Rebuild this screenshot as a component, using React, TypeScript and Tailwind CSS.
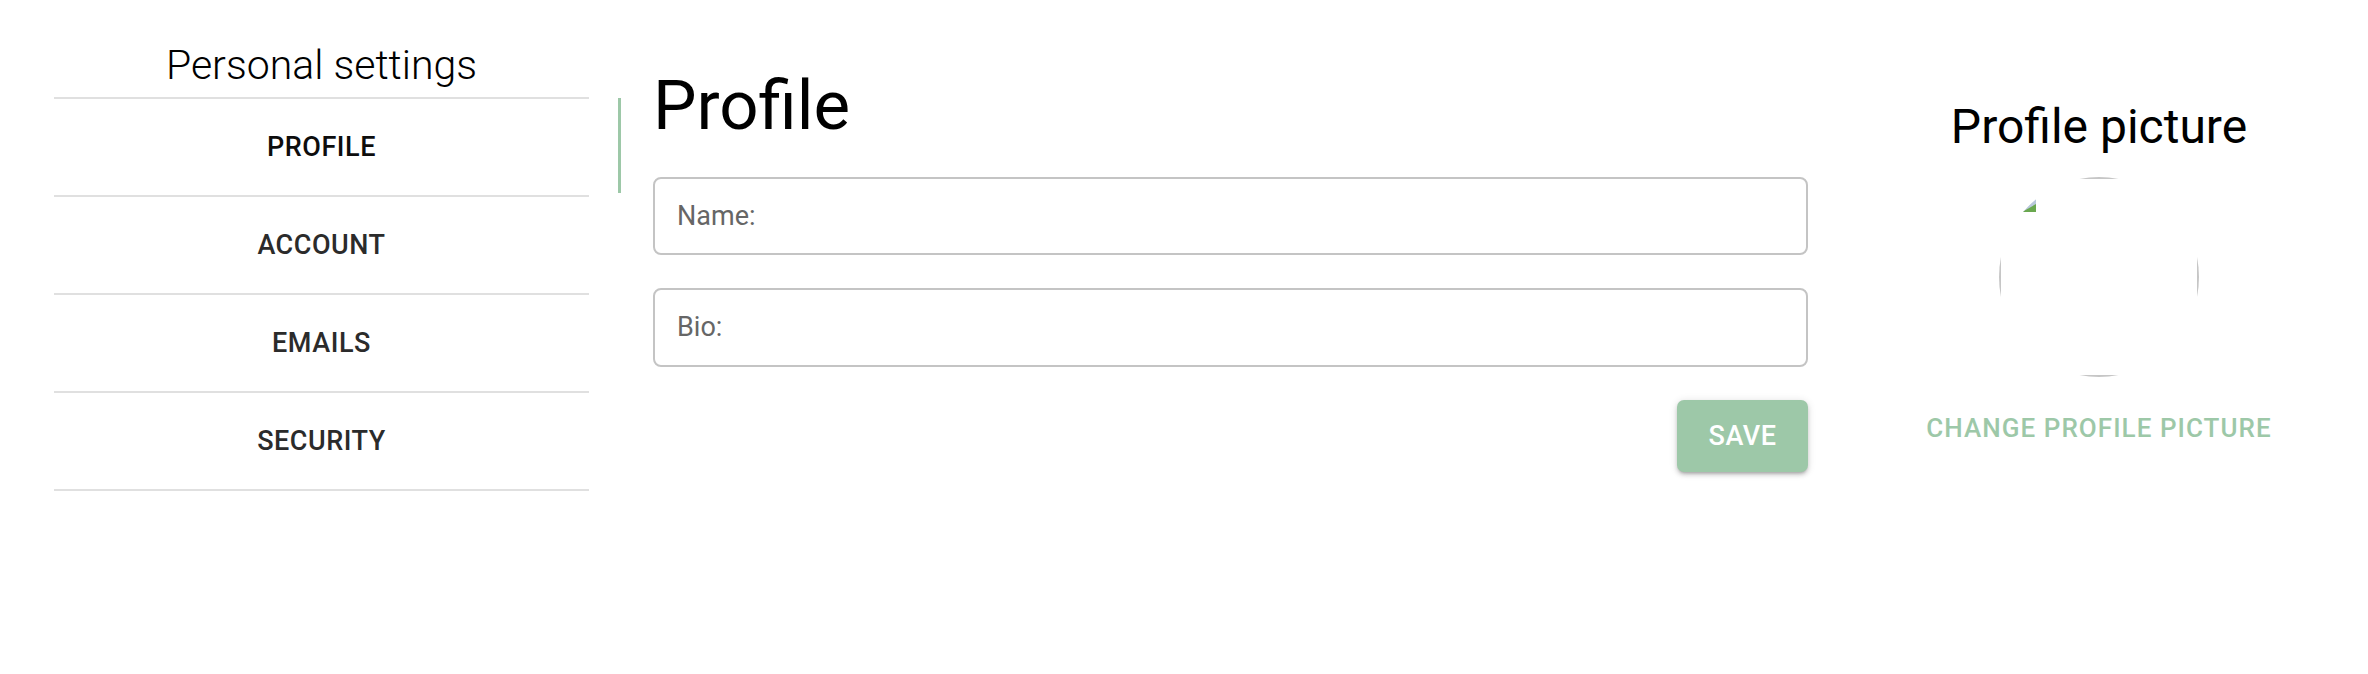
import { useState } from "react";

const TABS = ["PROFILE", "ACCOUNT", "EMAILS", "SECURITY"];

function BrokenAvatar() {
  // broken <img> inside a round frame: only the cardinal edges of the
  // square grey outline survive the clip
  return (
    <div className="relative w-[200px] h-[200px] rounded-full overflow-hidden">
      <div className="w-full h-full border-2 border-[#c6c6c6]" />
      <svg
        className="absolute left-[23px] top-[21px]"
        width="14"
        height="14"
        viewBox="0 0 14 14"
      >
        <polygon points="0,14 14,0 14,14" fill="#b9c8dc" />
        <polygon points="0,14 14,6 14,14" fill="#6aa84f" />
      </svg>
    </div>
  );
}

export default function App() {
  const [tab, setTab] = useState("PROFILE");

  return (
    <div
      className="w-[2368px] h-[674px] bg-white flex"
      style={{ fontFamily: "Roboto, 'Noto Sans', sans-serif" }}
    >
      {/* Settings nav */}
      <div className="ml-[54px] w-[535px] flex flex-col">
        <h2 className="mt-[41px] mb-[8px] text-[41px] leading-[48px] font-light text-center text-black">
          Personal settings
        </h2>
        <ul className="border-t-2 border-[#e0e0e0]">
          {TABS.map((t) => (
            <li
              key={t}
              onClick={() => setTab(t)}
              className={`h-[98px] border-b-2 border-[#e0e0e0] flex items-center justify-center text-[27px] font-medium tracking-[0.02em] cursor-pointer ${
                tab === t ? "text-[#0d0d0d]" : "text-[#2b2b2b]"
              }`}
            >
              {t}
            </li>
          ))}
        </ul>
      </div>

      {/* active tab indicator */}
      <div className="ml-[29px] mt-[98px] w-[3px] h-[95px] bg-[#9dc8a8]" />

      {/* Profile form */}
      <div className="ml-[32px] w-[1155px] flex flex-col">
        <h1 className="mt-[66px] text-[69px] leading-[80px] font-normal text-black">
          Profile
        </h1>
        <div className="mt-[31px] h-[78px] border-2 border-[#c4c4c4] rounded-[8px] flex items-center px-[22px]">
          <span className="text-[27px] text-[#666]">Name:</span>
        </div>
        <div className="mt-[33px] h-[79px] border-2 border-[#c4c4c4] rounded-[8px] flex items-center px-[22px]">
          <span className="text-[27px] text-[#666]">Bio:</span>
        </div>
        <div className="mt-[33px] flex justify-end">
          <button className="w-[131px] h-[72px] rounded-[7px] bg-[#9dc8a8] text-white text-[27px] font-medium tracking-[0.02em] shadow-[0_3px_3px_-2px_rgba(0,0,0,0.2),0_3px_4px_0_rgba(0,0,0,0.14),0_1px_8px_0_rgba(0,0,0,0.12)]">
            SAVE
          </button>
        </div>
      </div>

      {/* Picture */}
      <div className="ml-[23px] w-[536px] flex flex-col items-center">
        <h2 className="mt-[99px] text-[48px] leading-[56px] font-normal text-black">
          Profile picture
        </h2>
        <div className="mt-[22px]">
          <BrokenAvatar />
        </div>
        <button className="mt-[33px] text-[26px] leading-[36px] font-medium tracking-[0.04em] text-[#9dc8a8]">
          CHANGE PROFILE PICTURE
        </button>
      </div>
    </div>
  );
}
